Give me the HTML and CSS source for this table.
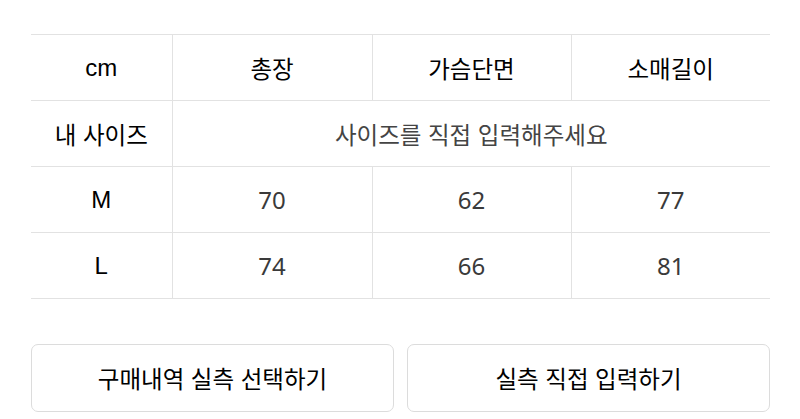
FILE: index.html
```html
<!DOCTYPE html>
<html lang="ko">
<head>
<meta charset="utf-8">
<link rel="stylesheet" href="styles.css">
</head>
<body>
<div class="wrap">
  <table class="size-table">
    <colgroup>
      <col class="c1"><col class="c2"><col class="c3"><col class="c4">
    </colgroup>
    <tr class="head">
      <th class="label latin">cm</th>
      <th>총장</th>
      <th>가슴단면</th>
      <th>소매길이</th>
    </tr>
    <tr>
      <th class="label">내 사이즈</th>
      <td colspan="3" class="hint">사이즈를 직접 입력해주세요</td>
    </tr>
    <tr>
      <th class="label latin">M</th>
      <td>70</td><td>62</td><td>77</td>
    </tr>
    <tr>
      <th class="label latin">L</th>
      <td>74</td><td>66</td><td>81</td>
    </tr>
  </table>
  <div class="actions">
    <button class="btn">구매내역 실측 선택하기</button>
    <button class="btn">실측 직접 입력하기</button>
  </div>
</div>
</body>
</html>
```

FILE: styles.css
```css
html, body {
  margin: 0;
  padding: 0;
  background: #ffffff;
}
body {
  font-family: "Noto Sans CJK KR", "Noto Sans", sans-serif;
}
.wrap {
  width: 739px;
  margin: 0 0 0 31px;
  padding-top: 34px;
}
.size-table {
  width: 100%;
  border-collapse: collapse;
  table-layout: fixed;
  border-top: 1px solid #e2e2e2;
}
.c1 { width: 141px; }
.c2 { width: 200px; }
.c3 { width: 199px; }
.c4 { width: 199px; }
.size-table th,
.size-table td {
  height: 65px;
  padding: 0;
  text-align: center;
  vertical-align: middle;
  font-size: 23.5px;
  border-bottom: 1px solid #e2e2e2;
  border-left: 1px solid #e2e2e2;
}
.size-table tr > :first-child {
  border-left: none;
}
.size-table th {
  font-weight: 400;
  color: #000;
}
.size-table th.latin {
  font-family: "Liberation Sans", "Noto Sans", sans-serif;
  font-size: 24px;
}
.size-table td {
  font-weight: 400;
  color: #3a3a3a;
  font-size: 24px;
  font-family: "Noto Sans", "Noto Sans CJK KR", sans-serif;
}
.size-table td.hint {
  font-family: "Noto Sans CJK KR", sans-serif;
  font-size: 23.5px;
  color: #444;
}
.actions {
  display: flex;
  gap: 13px;
  margin-top: 45px;
}
.btn {
  flex: 1;
  height: 68px;
  background: #fff;
  border: 1px solid #dcdcdc;
  border-radius: 7px;
  font-family: "Noto Sans CJK KR", sans-serif;
  font-size: 23.5px;
  font-weight: 400;
  color: #000;
  padding: 0;
}
```
